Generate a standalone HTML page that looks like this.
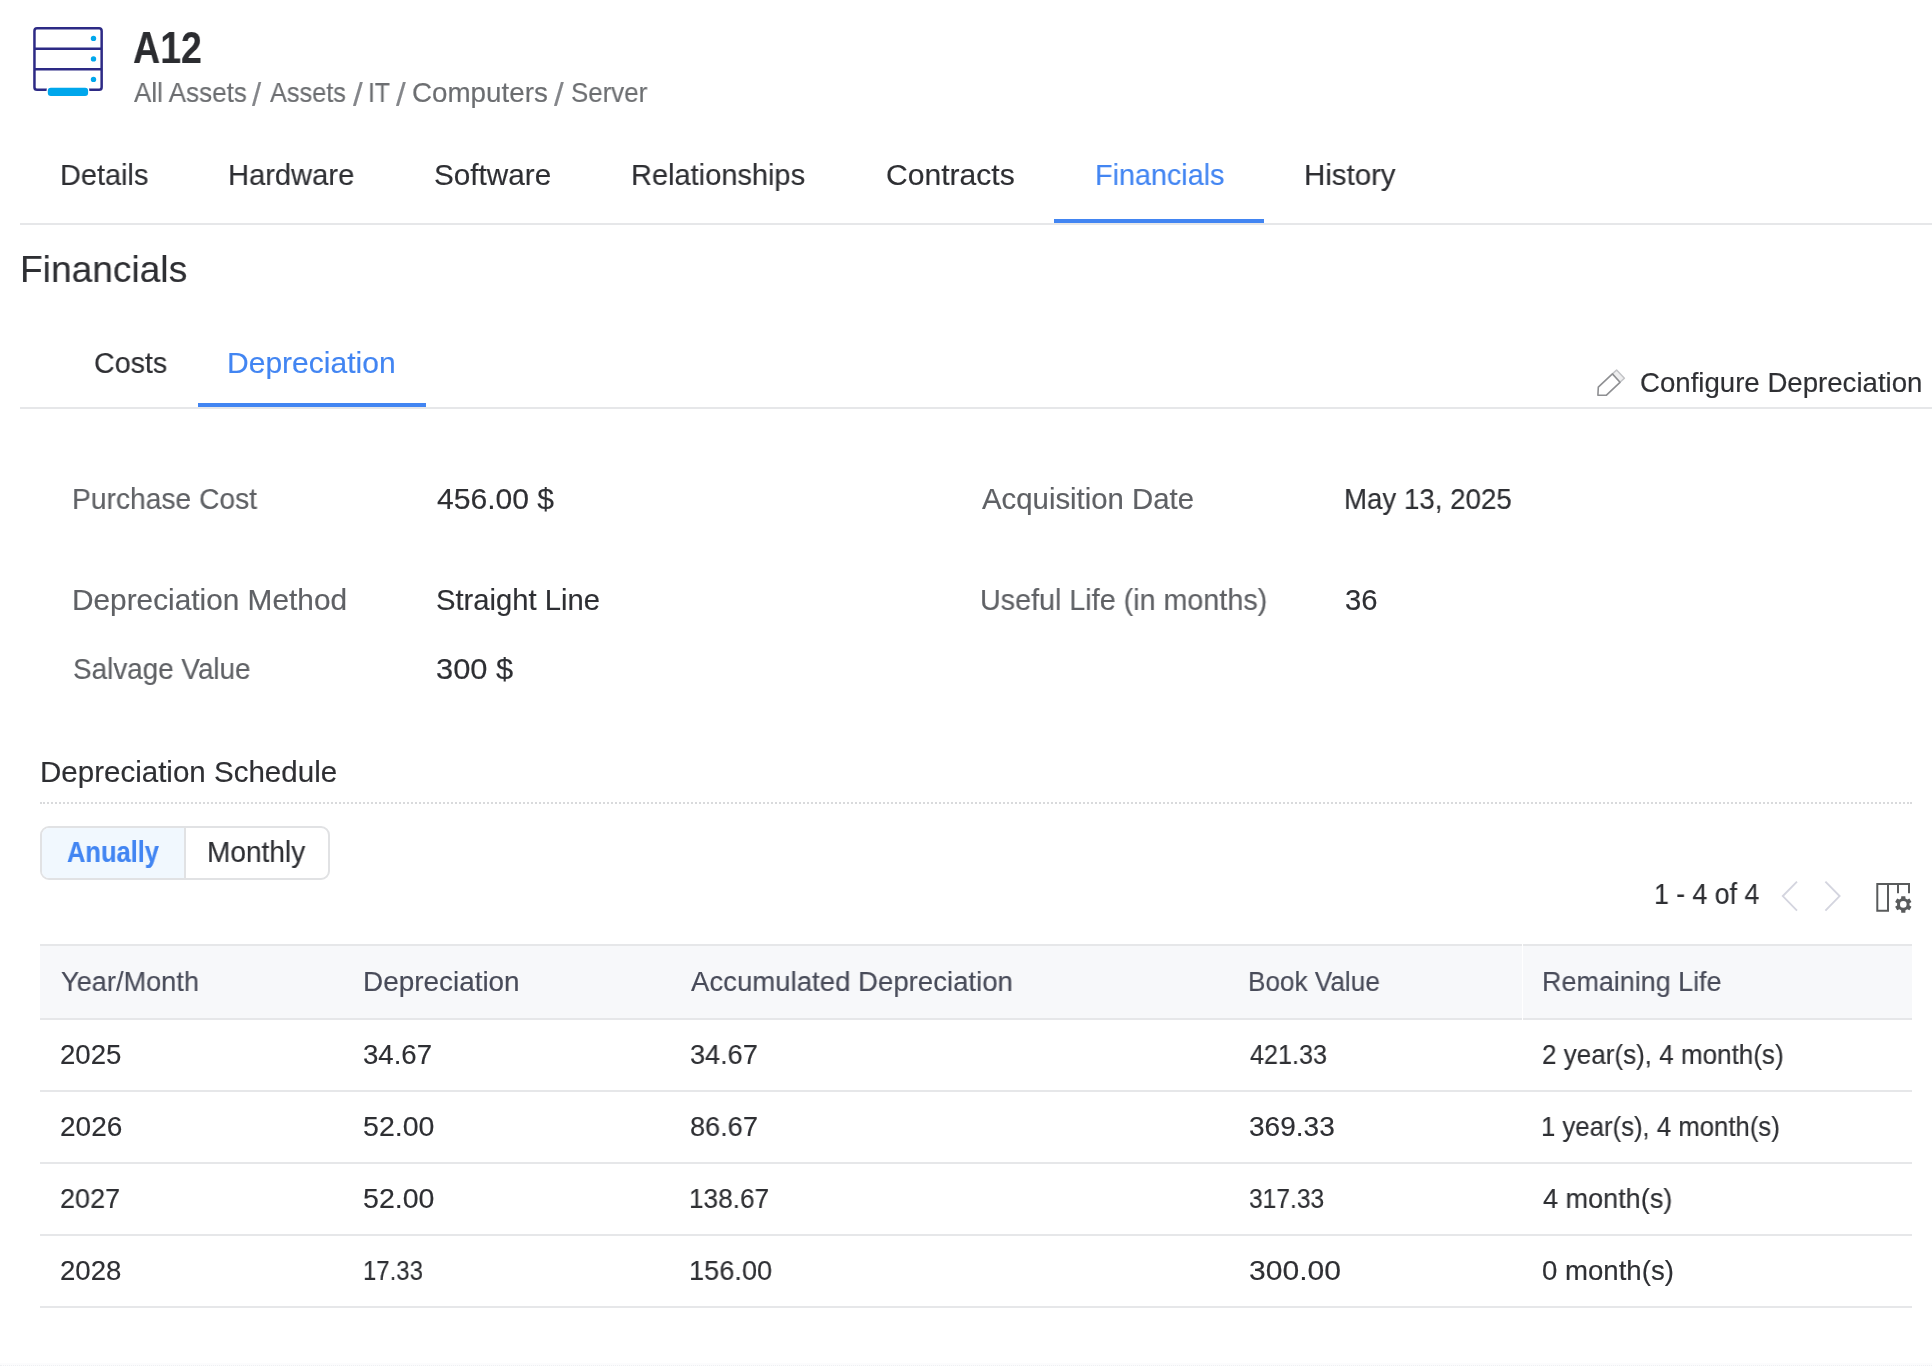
<!DOCTYPE html>
<html lang="en">
<head>
<meta charset="utf-8">
<title>A12 - Financials</title>
<style>
html,body{margin:0;padding:0;background:#fff;}
body{width:1932px;height:1366px;position:relative;overflow:hidden;font-family:"Liberation Sans",sans-serif;}
.t{position:absolute;white-space:nowrap;line-height:1;margin:0;padding:0;font-weight:400;will-change:transform;-webkit-text-stroke:0.15px currentColor;}
.ln{position:absolute;background:#e6e7e9;}
.abs{position:absolute;}
</style>
</head>
<body>
<header>
<svg class="abs" style="left:28px;top:20px" width="84" height="84" viewBox="28 20 84 84" aria-hidden="true">
<rect x="34.45" y="28.35" width="67.2" height="61.5" rx="2.6" fill="none" stroke="#2d2a85" stroke-width="2.5"/>
<line x1="34" y1="48.8" x2="102" y2="48.8" stroke="#2d2a85" stroke-width="2.5"/>
<line x1="34" y1="69.3" x2="102" y2="69.3" stroke="#2d2a85" stroke-width="2.5"/>
<circle cx="93.5" cy="38.4" r="2.7" fill="#00a7ec"/>
<circle cx="93.5" cy="58.9" r="2.7" fill="#00a7ec"/>
<circle cx="93.5" cy="79.4" r="2.7" fill="#00a7ec"/>
<rect x="46.6" y="86.6" width="42.7" height="10.5" rx="3.6" fill="#ffffff"/>
<rect x="47.8" y="87.8" width="40.3" height="8.1" rx="3" fill="#00a7ec"/>
</svg>
<h1 class="t" id="title" style="left:133.00px;top:25.58px;font-size:44.2px;color:#2b2c30;font-weight:700;transform:scaleX(0.8497);transform-origin:0 0;">A12</h1>
<nav aria-label="Breadcrumb">
<span class="t" id="cr1" style="left:134.00px;top:78.81px;font-size:27.4px;color:#6c6e71;transform:scaleX(0.9504);transform-origin:0 0;">All Assets</span>
<span class="t" id="cr2" style="left:252.00px;top:77.57px;font-size:33px;color:#84868a;transform:scaleX(0.9946);transform-origin:0 0;">/</span>
<span class="t" id="cr3" style="left:270.00px;top:78.81px;font-size:27.4px;color:#6c6e71;transform:scaleX(0.9226);transform-origin:0 0;">Assets</span>
<span class="t" id="cr4" style="left:353.00px;top:77.57px;font-size:33px;color:#84868a;transform:scaleX(1.0609);transform-origin:0 0;">/</span>
<span class="t" id="cr5" style="left:368.00px;top:78.81px;font-size:27.4px;color:#6c6e71;transform:scaleX(0.9045);transform-origin:0 0;">IT</span>
<span class="t" id="cr6" style="left:396.00px;top:77.57px;font-size:33px;color:#84868a;transform:scaleX(1.0609);transform-origin:0 0;">/</span>
<span class="t" id="cr7" style="left:412.00px;top:78.81px;font-size:27.4px;color:#6c6e71;transform:scaleX(1.0137);transform-origin:0 0;">Computers</span>
<span class="t" id="cr8" style="left:554.00px;top:77.57px;font-size:33px;color:#84868a;transform:scaleX(1.0609);transform-origin:0 0;">/</span>
<span class="t" id="cr9" style="left:571.00px;top:78.81px;font-size:27.4px;color:#6c6e71;transform:scaleX(0.9456);transform-origin:0 0;">Server</span>
</nav>
</header>
<nav aria-label="Asset sections">
<span class="t" id="n1" style="left:60.00px;top:159.86px;font-size:29.7px;color:#2e2f33;transform:scaleX(0.9733);transform-origin:0 0;">Details</span>
<span class="t" id="n2" style="left:228.00px;top:159.86px;font-size:29.7px;color:#2e2f33;transform:scaleX(0.9813);transform-origin:0 0;">Hardware</span>
<span class="t" id="n3" style="left:434.00px;top:159.86px;font-size:29.7px;color:#2e2f33;transform:scaleX(1.0000);transform-origin:0 0;">Software</span>
<span class="t" id="n4" style="left:631.00px;top:159.86px;font-size:29.7px;color:#2e2f33;transform:scaleX(0.9767);transform-origin:0 0;">Relationships</span>
<span class="t" id="n5" style="left:886.00px;top:159.86px;font-size:29.7px;color:#2e2f33;transform:scaleX(1.0132);transform-origin:0 0;">Contracts</span>
<span class="t" id="n6" style="left:1095.00px;top:159.86px;font-size:29.7px;color:#4285f2;transform:scaleX(0.9687);transform-origin:0 0;">Financials</span>
<span class="t" id="n7" style="left:1304.00px;top:159.86px;font-size:29.7px;color:#2e2f33;transform:scaleX(0.9907);transform-origin:0 0;">History</span>
<div class="ln" style="left:20px;top:223px;width:1912px;height:2px"></div>
<div class="abs" style="left:1054px;top:219px;width:210px;height:4px;background:#4285f2"></div>
</nav>
<main>
<section aria-label="Financials">
<h2 class="t" id="h1" style="left:20.00px;top:251.34px;font-size:37.4px;color:#2e2f33;transform:scaleX(0.9930);transform-origin:0 0;">Financials</h2>
<span class="t" id="s1" style="left:94.00px;top:347.86px;font-size:29.7px;color:#2e2f33;transform:scaleX(0.9649);transform-origin:0 0;">Costs</span>
<span class="t" id="s2" style="left:227.00px;top:347.86px;font-size:29.7px;color:#4285f2;transform:scaleX(1.0117);transform-origin:0 0;">Depreciation</span>
<div class="ln" style="left:20px;top:407px;width:1912px;height:2px"></div>
<div class="abs" style="left:198px;top:403px;width:228px;height:4px;background:#4285f2"></div>
<svg class="abs" style="left:1588px;top:362px" width="44" height="40" viewBox="1588 362 44 40" aria-hidden="true">
<path d="M1612.4 373.9 L1616.6 370 L1624.4 378.2 L1620 382.3" fill="#eeeeef" stroke="#c3c4c7" stroke-width="1.5" stroke-linejoin="round"/>
<path d="M1597.9 395.3 L1598.3 387.2 L1612.4 373.9 L1620 382.3 L1606.2 395.3 Z" fill="none" stroke="#8e8f92" stroke-width="1.6" stroke-linejoin="round"/>
</svg>
<span class="t" id="cfg" style="left:1640.00px;top:368.72px;font-size:27.5px;color:#2e2f33;transform:scaleX(1.0041);transform-origin:0 0;">Configure Depreciation</span>
</section>
<section aria-label="Depreciation details">
<span class="t" id="f1l" style="left:72.00px;top:485.28px;font-size:29.2px;color:#5f6165;transform:scaleX(0.9666);transform-origin:0 0;">Purchase Cost</span>
<span class="t" id="f1v" style="left:437.00px;top:485.28px;font-size:29.2px;color:#2e2f33;transform:scaleX(1.0298);transform-origin:0 0;">456.00 $</span>
<span class="t" id="f2l" style="left:982.00px;top:485.28px;font-size:29.2px;color:#5f6165;transform:scaleX(1.0055);transform-origin:0 0;">Acquisition Date</span>
<span class="t" id="f2v" style="left:1344.00px;top:485.28px;font-size:29.2px;color:#2e2f33;transform:scaleX(0.9477);transform-origin:0 0;">May 13, 2025</span>
<span class="t" id="f3l" style="left:72.00px;top:586.28px;font-size:29.2px;color:#5f6165;transform:scaleX(1.0212);transform-origin:0 0;">Depreciation Method</span>
<span class="t" id="f3v" style="left:436.00px;top:586.28px;font-size:29.2px;color:#2e2f33;transform:scaleX(1.0000);transform-origin:0 0;">Straight Line</span>
<span class="t" id="f4l" style="left:980.00px;top:586.28px;font-size:29.2px;color:#5f6165;transform:scaleX(0.9837);transform-origin:0 0;">Useful Life (in months)</span>
<span class="t" id="f4v" style="left:1345.00px;top:586.28px;font-size:29.2px;color:#2e2f33;transform:scaleX(1.0000);transform-origin:0 0;">36</span>
<span class="t" id="f5l" style="left:73.00px;top:655.28px;font-size:29.2px;color:#5f6165;transform:scaleX(0.9546);transform-origin:0 0;">Salvage Value</span>
<span class="t" id="f5v" style="left:436.00px;top:655.28px;font-size:29.2px;color:#2e2f33;transform:scaleX(1.0576);transform-origin:0 0;">300 $</span>
</section>
<section aria-label="Depreciation Schedule">
<h3 class="t" id="sch" style="left:40.00px;top:757.20px;font-size:29.3px;color:#2e2f33;transform:scaleX(1.0079);transform-origin:0 0;">Depreciation Schedule</h3>
<div class="abs" style="left:40px;top:802px;width:1872px;height:0;border-top:2px dotted #d9dadc"></div>
<div class="abs" style="left:40px;top:826px;width:286px;height:50px;border:2px solid #e1e2e4;border-radius:9px;background:#fff;overflow:hidden">
<div class="abs" style="left:0;top:0;width:142px;height:50px;background:#f1f8fe"></div>
<div class="abs" style="left:142px;top:0;width:2px;height:50px;background:#e1e2e4"></div>
</div>
<span class="t" id="tg1" style="left:67.00px;top:837.62px;font-size:28.8px;color:#4285f2;font-weight:700;transform:scaleX(0.8837);transform-origin:0 0;">Anually</span>
<span class="t" id="tg2" style="left:207.00px;top:837.62px;font-size:28.8px;color:#2e2f33;transform:scaleX(0.9737);transform-origin:0 0;">Monthly</span>
<span class="t" id="pg" style="left:1654.00px;top:878.86px;font-size:30px;color:#2e2f33;transform:scaleX(0.8892);transform-origin:0 0;">1 - 4 of 4</span>
<svg class="abs" style="left:1776px;top:874px" width="72" height="44" viewBox="1776 874 72 44" aria-hidden="true">
<path d="M1797 881.6 L1782.8 896.1 L1797 910.6" fill="none" stroke="#d4d5df" stroke-width="1.9"/>
<path d="M1825.4 881.6 L1839.6 896.1 L1825.4 910.6" fill="none" stroke="#d4d5df" stroke-width="1.9"/>
</svg>
<svg class="abs" style="left:1870px;top:878px" width="48" height="40" viewBox="1870 878 48 40" aria-hidden="true">
<path d="M1877.3 884.1 H1888 V910.8 H1877.3 Z" fill="none" stroke="#595b5c" stroke-width="2"/>
<path d="M1888 884.1 H1909 V893.2 M1898 884.1 V893.2" fill="none" stroke="#595b5c" stroke-width="2"/>
<path d="M1901.10 898.50 L1901.27 896.15 L1905.33 896.15 L1905.50 898.50 L1907.32 899.55 L1909.43 898.52 L1911.46 902.03 L1909.51 903.35 L1909.51 905.45 L1911.46 906.77 L1909.43 910.28 L1907.32 909.25 L1905.50 910.30 L1905.33 912.65 L1901.27 912.65 L1901.10 910.30 L1899.28 909.25 L1897.17 910.28 L1895.14 906.77 L1897.09 905.45 L1897.09 903.35 L1895.14 902.03 L1897.17 898.52 L1899.28 899.55 Z" fill="#595b5c"/>
<circle cx="1903.3" cy="904.4" r="3.3" fill="#ffffff"/>
</svg>
<div role="table" aria-label="Depreciation schedule">
<div class="abs" style="left:40px;top:946px;width:1872px;height:72px;background:#f7f8fa"></div>
<div class="ln" style="left:40px;top:944px;width:1872px;height:2px"></div>
<div class="ln" style="left:40px;top:1018px;width:1872px;height:2px"></div>
<div class="abs" style="left:1522px;top:944px;width:1px;height:76px;background:#fff"></div>
<div role="row">
<div class="t" id="th1" style="left:61.00px;top:967.80px;font-size:27.7px;color:#484b59;transform:scaleX(0.9813);transform-origin:0 0;">Year/Month</div>
<div class="t" id="th2" style="left:363.00px;top:967.80px;font-size:27.7px;color:#484b59;transform:scaleX(1.0076);transform-origin:0 0;">Depreciation</div>
<div class="t" id="th3" style="left:691.00px;top:967.80px;font-size:27.7px;color:#484b59;transform:scaleX(0.9958);transform-origin:0 0;">Accumulated Depreciation</div>
<div class="t" id="th4" style="left:1248.00px;top:967.80px;font-size:27.7px;color:#484b59;transform:scaleX(0.9445);transform-origin:0 0;">Book Value</div>
<div class="t" id="th5" style="left:1542.00px;top:967.80px;font-size:27.7px;color:#484b59;transform:scaleX(0.9720);transform-origin:0 0;">Remaining Life</div>
</div>
<div role="row">
<span class="t" id="r0c0" style="left:60.00px;top:1040.64px;font-size:27.6px;color:#2e2f33;transform:scaleX(1.0000);transform-origin:0 0;">2025</span>
<span class="t" id="r0c1" style="left:363.00px;top:1040.64px;font-size:27.6px;color:#2e2f33;transform:scaleX(1.0000);transform-origin:0 0;">34.67</span>
<span class="t" id="r0c2" style="left:690.00px;top:1040.64px;font-size:27.6px;color:#2e2f33;transform:scaleX(0.9822);transform-origin:0 0;">34.67</span>
<span class="t" id="r0c3" style="left:1250.00px;top:1040.64px;font-size:27.6px;color:#2e2f33;transform:scaleX(0.9125);transform-origin:0 0;">421.33</span>
<span class="t" id="r0c4" style="left:1542.00px;top:1040.64px;font-size:27.6px;color:#2e2f33;transform:scaleX(0.9435);transform-origin:0 0;">2 year(s), 4 month(s)</span>
<div class="ln" style="left:40px;top:1090px;width:1872px;height:2px"></div>
</div>
<div role="row">
<span class="t" id="r1c0" style="left:60.00px;top:1112.64px;font-size:27.6px;color:#2e2f33;transform:scaleX(1.0150);transform-origin:0 0;">2026</span>
<span class="t" id="r1c1" style="left:363.00px;top:1112.64px;font-size:27.6px;color:#2e2f33;transform:scaleX(1.0345);transform-origin:0 0;">52.00</span>
<span class="t" id="r1c2" style="left:690.00px;top:1112.64px;font-size:27.6px;color:#2e2f33;transform:scaleX(0.9836);transform-origin:0 0;">86.67</span>
<span class="t" id="r1c3" style="left:1249.00px;top:1112.64px;font-size:27.6px;color:#2e2f33;transform:scaleX(1.0157);transform-origin:0 0;">369.33</span>
<span class="t" id="r1c4" style="left:1541.00px;top:1112.64px;font-size:27.6px;color:#2e2f33;transform:scaleX(0.9324);transform-origin:0 0;">1 year(s), 4 month(s)</span>
<div class="ln" style="left:40px;top:1162px;width:1872px;height:2px"></div>
</div>
<div role="row">
<span class="t" id="r2c0" style="left:60.00px;top:1184.64px;font-size:27.6px;color:#2e2f33;transform:scaleX(0.9798);transform-origin:0 0;">2027</span>
<span class="t" id="r2c1" style="left:363.00px;top:1184.64px;font-size:27.6px;color:#2e2f33;transform:scaleX(1.0345);transform-origin:0 0;">52.00</span>
<span class="t" id="r2c2" style="left:689.00px;top:1184.64px;font-size:27.6px;color:#2e2f33;transform:scaleX(0.9494);transform-origin:0 0;">138.67</span>
<span class="t" id="r2c3" style="left:1249.00px;top:1184.64px;font-size:27.6px;color:#2e2f33;transform:scaleX(0.8904);transform-origin:0 0;">317.33</span>
<span class="t" id="r2c4" style="left:1543.00px;top:1184.64px;font-size:27.6px;color:#2e2f33;transform:scaleX(0.9802);transform-origin:0 0;">4 month(s)</span>
<div class="ln" style="left:40px;top:1234px;width:1872px;height:2px"></div>
</div>
<div role="row">
<span class="t" id="r3c0" style="left:60.00px;top:1256.64px;font-size:27.6px;color:#2e2f33;transform:scaleX(1.0000);transform-origin:0 0;">2028</span>
<span class="t" id="r3c1" style="left:363.00px;top:1256.64px;font-size:27.6px;color:#2e2f33;transform:scaleX(0.8684);transform-origin:0 0;">17.33</span>
<span class="t" id="r3c2" style="left:689.00px;top:1256.64px;font-size:27.6px;color:#2e2f33;transform:scaleX(0.9854);transform-origin:0 0;">156.00</span>
<span class="t" id="r3c3" style="left:1249.00px;top:1256.64px;font-size:27.6px;color:#2e2f33;transform:scaleX(1.0892);transform-origin:0 0;">300.00</span>
<span class="t" id="r3c4" style="left:1542.00px;top:1256.64px;font-size:27.6px;color:#2e2f33;transform:scaleX(1.0000);transform-origin:0 0;">0 month(s)</span>
<div class="ln" style="left:40px;top:1306px;width:1872px;height:2px"></div>
</div>
</div>
</section>
</main>
<div class="abs" style="left:0;top:1363px;width:1932px;height:3px;background:#fcfcfd"></div>
<div class="abs" style="left:0;top:1365px;width:1932px;height:0;border-top:1px dotted #eef0f3"></div>
</body>
</html>
